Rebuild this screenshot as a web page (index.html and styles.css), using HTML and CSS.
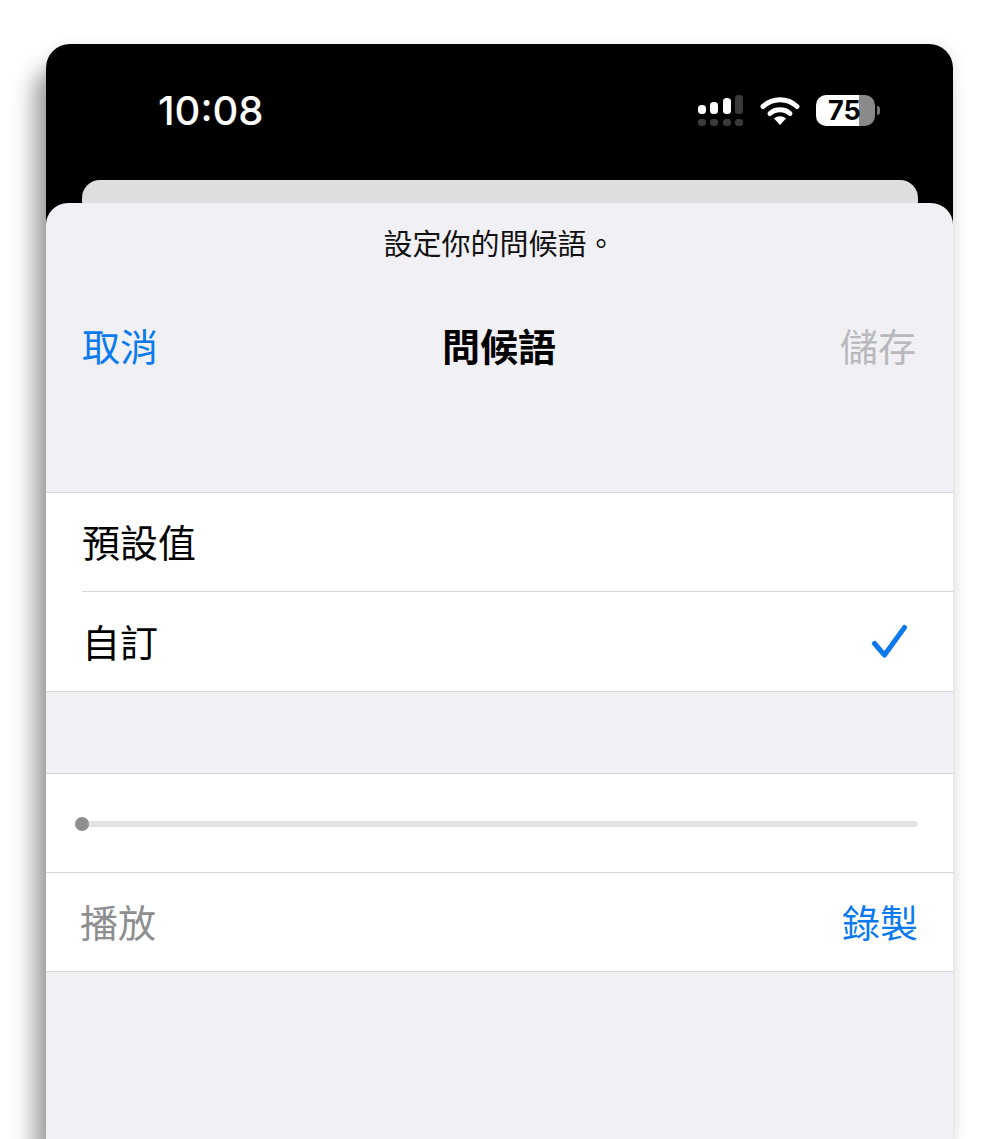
FILE: index.html
```html
<!DOCTYPE html>
<html lang="zh-Hant">
<head>
    <meta charset="UTF-8">
    <meta name="viewport" content="width=device-width, initial-scale=1.0">
    <title>問候語</title>
    <link rel="stylesheet" href="styles.css">
</head>
<body>
    <div class="phone">
        <div class="status-bar">
            <span class="time">10:08</span>
            <div class="status-icons">
                <svg class="signal" width="46" height="32" viewBox="0 0 46 32">
                    <rect x="0" y="10" width="8" height="9" rx="3.500" fill="#fff"/>
                    <rect x="12" y="7" width="8" height="12" rx="3.500" fill="#fff"/>
                    <rect x="25" y="3" width="8" height="16" rx="3.500" fill="#fff"/>
                    <rect x="37" y="0" width="8" height="19" rx="3" fill="#3a3a3a"/>
                    <rect x="0" y="24" width="8" height="7" rx="3" fill="#3a3a3a"/>
                    <rect x="12" y="24" width="8" height="7" rx="3" fill="#3a3a3a"/>
                    <rect x="25" y="24" width="8" height="7" rx="3" fill="#3a3a3a"/>
                    <rect x="37" y="24" width="8" height="7" rx="3" fill="#3a3a3a"/>
                </svg>
                <svg class="wifi" width="40" height="30" viewBox="0 0 40 30">
                    <path d="M3 11.500 C12.500 2.500 27.500 2.500 37 11.500" fill="none" stroke="#fff" stroke-width="5" stroke-linecap="round"/>
                    <path d="M10 18.500 C15.500 13.500 24.500 13.500 30 18.500" fill="none" stroke="#fff" stroke-width="5" stroke-linecap="round"/>
                    <path d="M14 23.500 C17.500 20.500 22.500 20.500 26 23.500 L20 30 Z" fill="#fff"/>
                </svg>
                <div class="battery">
                    <div class="battery-body">
                        <span class="battery-num">75</span>
                    </div>
                    <div class="battery-tip"></div>
                </div>
            </div>
        </div>
        <div class="back-card"></div>
        <div class="sheet">
            <p class="hint">設定你的問候語。</p>
            <div class="nav">
                <span class="blue">取消</span>
                <span class="nav-title">問候語</span>
                <span class="disabled">儲存</span>
            </div>

            <div class="group first">
                <div class="row"><span>預設值</span></div>
                <div class="row">
                    <span>自訂</span>
                    <svg class="check" width="38" height="38" viewBox="0 0 38 38">
                        <path d="M3.500 19.500 L13.500 31 L33.500 3.500" fill="none" stroke="#0a7aee" stroke-width="5" stroke-linecap="round" stroke-linejoin="round"/>
                    </svg>
                </div>
            </div>

            <div class="group">
                <div class="row slider-row">
                    <div class="slider"><div class="knob"></div></div>
                </div>
                <div class="row">
                    <span class="muted">播放</span>
                    <span class="blue">錄製</span>
                </div>
            </div>
        </div>
    </div>
</body>
</html>
```

FILE: styles.css
```css
html, body {
    height: 100%;
}
body {
    margin: 0;
    background-color: #fff;
    font-family: "Noto Sans CJK TC", "Noto Sans", sans-serif;
    overflow: hidden;
}
.phone {
    width: 907px;
    height: 1095px;
    margin: 44px 0 0 46px;
    background-color: #000;
    border-radius: 24px 24px 0 0;
    box-shadow: -12px 24px 22px rgba(0,0,0,0.38), 2px 0 14px rgba(0,0,0,0.08);
    display: flex;
    flex-direction: column;
}
.status-bar {
    height: 136px;
    flex-shrink: 0;
    display: flex;
    justify-content: space-between;
    padding: 0 73px 0 112px;
    color: #fff;
}
.time {
    font-family: Inter, sans-serif;
    font-size: 40px;
    font-weight: 500;
    line-height: 46px;
    margin-top: 44px;
}
.status-icons {
    display: flex;
    align-items: flex-start;
    margin-top: 51px;
}
.signal {
    margin-right: 16px;
}
.wifi {
    margin-right: 16px;
}
.battery {
    display: flex;
    align-items: center;
}
.battery-body {
    width: 59px;
    height: 31px;
    border-radius: 10px;
    background: linear-gradient(to right, #fff 43px, #8a8a8a 43px);
    display: flex;
    align-items: center;
    padding-left: 12px;
    box-sizing: border-box;
}
.battery-num {
    font-family: Inter, sans-serif;
    font-size: 27px;
    font-weight: 700;
    color: #000;
    line-height: 31px;
}
.battery-tip {
    width: 3px;
    height: 9px;
    margin-left: 2px;
    background-color: #777;
    border-radius: 0 3px 3px 0;
}
.back-card {
    height: 23px;
    flex-shrink: 0;
    margin: 0 35px 0 36px;
    background-color: #dedede;
    border-radius: 18px 18px 0 0;
}
.sheet {
    flex: 1;
    background-color: #f0f0f5;
    border-radius: 22px 22px 0 0;
}
.hint {
    margin: 0;
    padding-top: 21px;
    height: 36px;
    line-height: 36px;
    text-align: center;
    font-size: 29px;
    color: #111;
}
.nav {
    height: 60px;
    margin-top: 54px;
    padding: 0 37px 0 36px;
    display: flex;
    justify-content: space-between;
    align-items: center;
    font-size: 38px;
}
.nav-title {
    font-weight: 700;
    color: #000;
}
.blue {
    color: #0a7aee;
}
.disabled {
    color: #b9b9bb;
}
.group {
    background-color: #fff;
    border-top: 1px solid #d6d6d8;
    margin-top: 81px;
}
.group.first {
    margin-top: 118px;
}
.row {
    height: 95px;
    padding-bottom: 3px;
    margin-left: 36px;
    padding-right: 35px;
    border-bottom: 1px solid #d8d8da;
    display: flex;
    justify-content: space-between;
    align-items: center;
    font-size: 38px;
    color: #000;
}
.group.first .row:last-child {
    height: 96px;
    padding-left: 36px;
}
.group .row:last-child {
    margin-left: 0;
    padding-left: 34px;
}
.slider-row {
    height: 98px;
    margin-left: 0;
    padding: 0 35px 0 36px;
}
.check {
    margin-right: 9px;
    margin-top: 6px;
}
.muted {
    color: #8e8e90;
}
.slider {
    flex: 1;
    height: 6px;
    margin-top: 2px;
    background-color: #e3e3e3;
    border-radius: 3px;
    position: relative;
}
.knob {
    position: absolute;
    left: -7px;
    top: -4px;
    width: 14px;
    height: 14px;
    border-radius: 50%;
    background-color: #8e8e90;
}
```
